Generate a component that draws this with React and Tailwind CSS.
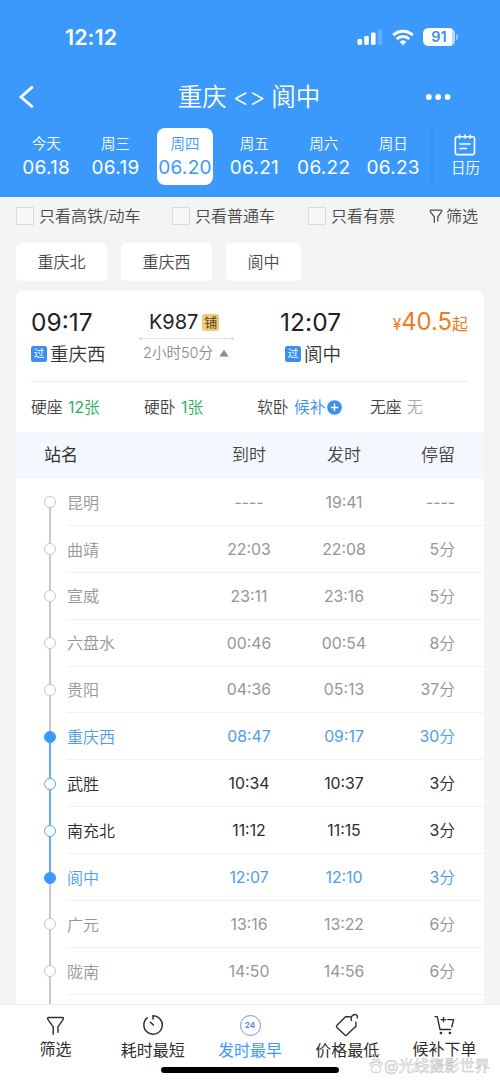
import React from "react";

const days = [
  ["今天", "06.18"],
  ["周三", "06.19"],
  ["周四", "06.20"],
  ["周五", "06.21"],
  ["周六", "06.22"],
  ["周日", "06.23"],
];

const stops = [
  ["昆明", "----", "19:41", "----", "past"],
  ["曲靖", "22:03", "22:08", "5分", "past"],
  ["宣威", "23:11", "23:16", "5分", "past"],
  ["六盘水", "00:46", "00:54", "8分", "past"],
  ["贵阳", "04:36", "05:13", "37分", "past"],
  ["重庆西", "08:47", "09:17", "30分", "from"],
  ["武胜", "10:34", "10:37", "3分", "mid"],
  ["南充北", "11:12", "11:15", "3分", "mid"],
  ["阆中", "12:07", "12:10", "3分", "to"],
  ["广元", "13:16", "13:22", "6分", "past"],
  ["陇南", "14:50", "14:56", "6分", "past"],
  ["", "", "", "", "none"],
];

const textColor = {
  past: "text-[#969696]",
  from: "text-[#4f9cec]",
  to: "text-[#4f9cec]",
  mid: "text-[#2b2b2b]",
  none: "text-[#969696]",
};
const dotColor = {
  past: "border-[#c6c6c6] bg-white",
  from: "border-[#3b99fc] bg-[#3b99fc]",
  to: "border-[#3b99fc] bg-[#3b99fc]",
  mid: "border-[#5da4ee] bg-white",
};
const GRAY = "bg-[#c8c8c8]";
const BLUE = "bg-[#62aaf3]";
const upper = { past: GRAY, from: GRAY, mid: BLUE, to: BLUE, none: GRAY };
const lower = { past: GRAY, from: BLUE, mid: BLUE, to: GRAY, none: GRAY };

function StatusBar() {
  return (
    <div className="flex h-[74px] items-center pl-[65px] pr-[42px] text-white">
      <span className="pt-[2px] text-[21.5px] font-semibold leading-none tracking-[0.05px]">12:12</span>
      <div className="ml-auto flex items-center gap-[9px]">
        <svg width="26" height="18" viewBox="0 0 26 18" fill="white">
          <rect x="0.5" y="11" width="4.6" height="6" rx="1.4" />
          <rect x="7.2" y="8" width="4.6" height="9" rx="1.4" />
          <rect x="14" y="4.6" width="4.6" height="12.4" rx="1.4" />
          <rect x="20.6" y="1.4" width="4.6" height="15.6" rx="1.4" opacity=".2" />
        </svg>
        <svg width="22" height="17" viewBox="0 0 22 17" fill="none" stroke="white" strokeWidth="2.9">
          <path d="M1.2 6.1a14.2 14.2 0 0 1 19.6 0" />
          <path d="M4.7 10a9.2 9.2 0 0 1 12.6 0" />
          <path d="M11 16.3 7.6 12.8a5 5 0 0 1 6.8 0z" fill="white" stroke="none" />
        </svg>
        <div className="flex items-center gap-[1px]">
          <div className="flex h-[18px] w-[32px] items-center justify-center rounded-[5.5px] bg-[linear-gradient(to_right,white_91%,#b4d8fe_91%)] text-[14.5px] font-semibold leading-none text-[#3b8ff0]">
            91
          </div>
          <div className="h-[6px] w-[2px] rounded-r-full bg-[#92c6fd]" />
        </div>
      </div>
    </div>
  );
}

function Header() {
  return (
    <header className="h-[197px] shrink-0 bg-[#3b99fc] text-white">
      <StatusBar />
      <div className="flex h-[46px] items-center justify-between pl-[18px] pr-[48px]">
        <svg width="18" height="24" viewBox="0 0 18 24" fill="none" stroke="white" strokeWidth="2.8">
          <path d="M14.8 1.6 3 12l11.8 10.3" />
        </svg>
        <h1 className="flex items-center pl-[37px] text-[24.5px] font-[350] leading-none">
          重庆<span className="px-[6px] pt-[1px] text-[25px]">&lt;&gt;</span>阆中
        </h1>
        <svg width="27" height="8" viewBox="0 0 27 8" fill="white">
          <circle cx="3.8" cy="4" r="2.9" />
          <circle cx="13.2" cy="4" r="2.9" />
          <circle cx="22.6" cy="4" r="2.9" />
        </svg>
      </div>
      <div className="flex h-[77px] items-start pl-[11.5px] pt-[8px]">
        {days.map(([d, n], i) => (
          <div key={n} className="flex w-[69.4px] justify-center">
            <div
              className={
                "flex h-[57px] w-[56px] flex-col items-center rounded-[8px] pt-[7px] " +
                (i === 2 ? "bg-white text-[#3b99fc]" : "")
              }
            >
              <span className="text-[14.5px] font-[350] leading-[18px]">{d}</span>
              <span className="mt-[5px] text-[19px] leading-[20px] tracking-[0.3px]">{n}</span>
            </div>
          </div>
        ))}
        <div className="ml-[1px] h-[57px] w-[4px] bg-[linear-gradient(to_right,#3b99fc,#3692f2)]" />
        <div className="flex flex-1 flex-col items-center pr-[2px] pt-[6px]">
          <svg width="22" height="22" viewBox="0 0 22 22" fill="none" stroke="white" strokeWidth="1.6" strokeLinecap="round">
            <rect x="1.3" y="2.8" width="19.2" height="17.8" rx="2" />
            <path d="M5.5 1v3.2M11 1v3M16.3 1v3.2M6 10h10M6 14.5h6.5" />
          </svg>
          <span className="mt-[3px] text-[14.5px] font-[350] leading-[18px]">日历</span>
        </div>
      </div>
    </header>
  );
}

function Check({ children, className }) {
  return (
    <label className={"flex items-center gap-[5px] " + className}>
      <span className="h-[18px] w-[18px] border border-[#d9d9d9] bg-[#f7f7f7]" />
      <span>{children}</span>
    </label>
  );
}

function Funnel({ size, stroke }) {
  return (
    <svg width={size} height={size} viewBox="0 0 20 20" fill="none" stroke="currentColor" strokeWidth={stroke} strokeLinejoin="round" strokeLinecap="round">
      <path d="M7.6 19.2V11.4L2.4 4.4Q.8 1.5 3 1.500h14q2.200 0 .6 2.900L12.600 11.400v5.800" />
    </svg>
  );
}

function Pass() {
  return (
    <span className="flex h-[16px] w-[16px] items-center justify-center rounded-[2.5px] bg-[#3b8ff0] text-[10.5px] font-normal leading-none text-white">
      过
    </span>
  );
}

function Summary() {
  return (
    <div className="mx-[15px] flex h-[91px] border-b border-[#ededed] pt-[17px]">
      <div className="w-[108px]">
        <div className="text-[24.5px] leading-[29px] text-[#222]">09:17</div>
        <div className="mt-[5px] flex items-center gap-[3px] text-[18.5px] font-[350] leading-[24px] text-[#333]">
          <Pass />重庆西
        </div>
      </div>
      <div className="w-[95px]">
        <div className="flex h-[28px] items-center gap-[4px] pl-[10px] text-[20px] tracking-[-0.1px] text-[#222]">
          K987
          <span className="flex h-[17px] w-[17px] items-center justify-center rounded-[2.5px] bg-[#f0cb7a] text-[13px] leading-none tracking-normal text-[#5a421c]">
            铺
          </span>
        </div>
        <div className="mt-[1px] flex items-center">
          <i className="h-[3px] w-[3px] rounded-full bg-[#dcdcdc]" />
          <i className="h-px flex-1 bg-[#e0e0e0]" />
          <i className="h-[3px] w-[3px] rounded-full bg-[#dcdcdc]" />
        </div>
        <div className="mt-[2px] flex items-center gap-[6px] whitespace-nowrap pl-[4px] text-[14.5px] font-[350] leading-[22px] text-[#888]">
          <span>2小时50分</span>
          <svg width="10" height="8" viewBox="0 0 10 8"><path d="M5 .8 9.7 7.4H.3z" fill="#8c8c8c" /></svg>
        </div>
      </div>
      <div className="ml-[46px] w-[90px]">
        <div className="text-[24.5px] leading-[29px] tracking-[0.1px] text-[#222]">12:07</div>
        <div className="mt-[5px] flex items-center gap-[3px] pl-[5px] text-[18.5px] font-[350] leading-[24px] text-[#333]">
          <Pass />阆中
        </div>
      </div>
      <div className="flex flex-1 items-baseline justify-end whitespace-nowrap pr-[1px] text-[#ee7a22]">
        <span className="text-[15.5px]">¥</span>
        <span className="text-[23.8px] leading-[28px]">40.5</span>
        <span className="text-[16px]">起</span>
      </div>
    </div>
  );
}

function Seats() {
  return (
    <div className="flex h-[50px] items-center pl-[15px] pt-[1px] text-[15.8px] font-[350] text-[#444]">
      <span className="w-[113px]">硬座 <span className="ml-[1px] text-[#2fae5b]"><span className="font-normal">12</span>张</span></span>
      <span className="w-[113px]">硬卧 <span className="ml-[1px] text-[#2fae5b]"><span className="font-normal">1</span>张</span></span>
      <span className="flex w-[113px] items-center whitespace-pre">
        软卧 <span className="ml-[1px] text-[#3b8ff0]">候补</span>
        <svg className="ml-[1px]" width="15" height="15" viewBox="0 0 15 15">
          <circle cx="7.5" cy="7.5" r="7.3" fill="#3b8ff0" />
          <path d="M3.7 7.5h7.6M7.5 3.7v7.6" stroke="white" strokeWidth="1.5" />
        </svg>
      </span>
      <span>无座 <span className="ml-[1px] text-[#aaa]">无</span></span>
    </div>
  );
}

function Stop({ stop }) {
  const [name, arrive, depart, stay, kind] = stop;
  const first = name === "昆明";
  return (
    <div className={"flex h-[46.9px] shrink-0 pl-[28px] text-[16px] font-[350] " + textColor[kind]}>
      <div className="flex w-[12px] flex-col items-center">
        <i className={"w-[1.5px] flex-1 " + (first ? "" : upper[kind])} />
        {kind !== "none" && <i className={"h-[12px] w-[12px] shrink-0 rounded-full border-[1.5px] " + dotColor[kind]} />}
        <i className={"w-[1.5px] flex-1 " + lower[kind]} />
      </div>
      <div className="ml-[11px] flex flex-1 items-center border-b border-[#f2f2f2] pt-[1.5px]">
        <span className="w-[134px]">{name}</span>
        <span className="w-[96px] text-center text-[15.8px] font-normal">{arrive}</span>
        <span className="w-[94px] text-center text-[15.8px] font-normal">{depart}</span>
        <span className="flex-1 pr-[29px] text-right text-[15.8px]">
          <span className="font-normal">{stay.replace("分", "")}</span>
          {stay.endsWith("分") && "分"}
        </span>
      </div>
    </div>
  );
}

function Tab({ icon, label, active, low }) {
  return (
    <div className={"flex flex-1 flex-col items-center text-[16px] " + (active ? "text-[#3b99fc]" : "text-[#2e2e2e]")}>
      <div className="flex h-[24px] items-center">{icon}</div>
      <span className={"whitespace-nowrap leading-[20px] " + (low ? "mt-[3px]" : "mt-[2px]")}>{label}</span>
    </div>
  );
}

function TabBar() {
  return (
    <nav className="relative h-[80px] shrink-0 border-t border-[#ececec] bg-white">
      <div className="flex px-[7px] pt-[8px]">
        <Tab label="筛选" icon={<Funnel size={19} stroke={1.5} />} />
        <Tab
          low
          label="耗时最短"
          icon={
            <svg width="22" height="22" viewBox="0 0 22 22" fill="none" stroke="currentColor" strokeWidth="1.5" strokeLinecap="round">
              <path d="M11 5V1.8a9.2 9.2 0 1 1-5.8 2.1M8.4 8.2l3 2.8" />
            </svg>
          }
        />
        <Tab
          active
          low
          label="发时最早"
          icon={
            <span className="flex h-[21px] w-[21px] items-center justify-center rounded-full border-[1.3px] border-[#6f94e6] text-[8px] font-bold leading-none text-[#5f88e0]">
              24
            </span>
          }
        />
        <Tab
          low
          label="价格最低"
          icon={
            <svg width="24" height="24" viewBox="0 0 24 24" fill="none" stroke="currentColor" strokeWidth="1.4" strokeLinecap="round" strokeLinejoin="round">
              <path d="M15 3.8h-4.5L1.8 12.6q-.7.9.1 1.8l8 7.700q.9.8 1.800 0l9.200-8.900V9.200M16.500 7.600q-1.200-3 1-5 2.200-1.800 4.200-.4 1.200 1.200.4 2.800" />
            </svg>
          }
        />
        <Tab
          label="候补下单"
          icon={
            <svg width="21" height="20" viewBox="0 0 21 20" fill="none" stroke="currentColor" strokeWidth="1.4" strokeLinecap="round" strokeLinejoin="round">
              <path d="M1 1.6h2.3L6 14.5h10.4M13.8 4.6h5.8l-1.8 7.2M7.2 4.6h4.6M9.5 2.4v4.4" />
              <path d="M6.9 18h.1M15.900 18h.1" strokeWidth="2.6" />
            </svg>
          }
        />
      </div>
      <div className="absolute left-[161px] top-[62px] h-[6px] w-[178px] rounded-full bg-black" />
      <div className="absolute left-[369px] top-[53px] flex items-center gap-[1px] whitespace-nowrap text-[15.2px] leading-[15px] text-white [-webkit-text-stroke:0.5px_#bcbcbc]">
        <svg width="14" height="15" viewBox="0 0 14 15" fill="white" stroke="#c4c4c4" strokeWidth="1">
          <ellipse cx="2.2" cy="6.2" rx="1.5" ry="2" />
          <ellipse cx="5" cy="2.8" rx="1.5" ry="2" />
          <ellipse cx="9" cy="2.8" rx="1.5" ry="2" />
          <ellipse cx="11.8" cy="6.2" rx="1.5" ry="2" />
          <path d="M7 6.5C5.2 6.5 4.6 8.6 3 10c-1.7 1.7-.6 4.3 1.4 4.3h5.2c2 0 3.1-2.6 1.4-4.3C9.4 8.6 8.8 6.5 7 6.5z" />
        </svg>
        @光线摄影世界
      </div>
    </nav>
  );
}

export default function App() {
  return (
    <div className="flex h-[1084px] w-[500px] flex-col overflow-hidden bg-[#f4f4f4] font-[Inter,'Noto_Sans_CJK_SC',sans-serif]">
      <Header />
      <div className="flex h-[38px] shrink-0 items-center whitespace-nowrap pl-[16px] text-[16px] font-[350] text-[#4a4a4a]">
        <Check className="w-[156px]">只看高铁/动车</Check>
        <Check className="w-[136px]">只看普通车</Check>
        <Check className="w-[121px]">只看有票</Check>
        <span className="flex items-center gap-[3px]"><Funnel size={14} stroke={1.8} />筛选</span>
      </div>
      <div className="flex shrink-0 gap-[14px] pl-[16px] pt-[8px] text-[16px] font-[350] text-[#4a4a4a]">
        <span className="flex h-[38px] w-[91px] items-center justify-center rounded-[5px] bg-white">重庆北</span>
        <span className="flex h-[38px] w-[91px] items-center justify-center rounded-[5px] bg-white">重庆西</span>
        <span className="flex h-[38px] w-[75px] items-center justify-center rounded-[5px] bg-white">阆中</span>
      </div>
      <main className="mx-[16px] mt-[10px] flex min-h-0 flex-1 flex-col overflow-hidden rounded-t-[7px] bg-white">
        <div className="shrink-0">
          <Summary />
          <Seats />
          <div className="flex h-[47px] items-center bg-[#f3f8fe] pl-[28px] text-[17px] font-[350] text-[#444]">
            <span className="w-[157px] font-normal text-[#333]">站名</span>
            <span className="w-[96px] text-center">到时</span>
            <span className="w-[94px] text-center">发时</span>
            <span className="flex-1 pr-[29px] text-right">停留</span>
          </div>
        </div>
        {stops.map((s, i) => <Stop key={i} stop={s} />)}
      </main>
      <TabBar />
    </div>
  );
}
